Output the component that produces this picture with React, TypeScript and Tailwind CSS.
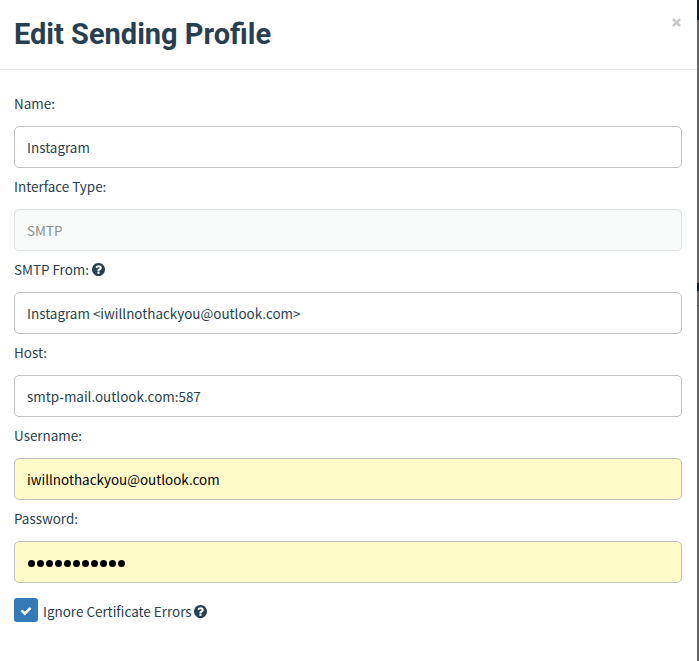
import type { ReactNode } from "react";

function QuestionIcon() {
  return (
    <svg viewBox="128 128 1536 1536" className="size-[13px] shrink-0" fill="currentColor">
      <path d="M1024 1376v-192q0-14-9-23t-23-9h-192q-14 0-23 9t-9 23v192q0 14 9 23t23 9h192q14 0 23-9t9-23zM1280 704q0-88-55.5-163t-138.5-116-170-41q-243 0-371 213-15 24 8 42l132 100q7 6 19 6 16 0 25-12 53-68 86-92 34-24 86-24 48 0 85.5 26t37.5 59q0 38-20 61t-68 45q-63 28-115.5 86.5t-52.5 125.5v36q0 14 9 23t23 9h192q14 0 23-9t9-23q0-19 21.5-49.5t54.5-49.5q32-18 49-28.5t46-35 44.5-48 28-60.5 12.5-81zM1664 896q0 209-103 385.5t-279.5 279.5-385.5 103-385.5-103-279.5-279.5-103-385.5 103-385.5 279.5-279.5 385.5-103 385.5 103 279.5 279.5 103 385.5z" />
    </svg>
  );
}

type FieldProps = { label: string; help?: boolean; tone: string; children: ReactNode };

function Field({ label, help, tone, children }: FieldProps) {
  return (
    <div className="h-[83px]">
      <div className="flex h-[21px] items-center gap-[3px]">
        <span>{label}</span>
        {help && <QuestionIcon />}
      </div>
      <div className={`mt-[12px] flex h-[42px] items-center rounded-[5px] border px-3 ${tone}`}>
        {children}
      </div>
    </div>
  );
}

const plain = "border-[#bdc3c7] bg-white";
const disabled = "border-[#e0e4e5] bg-[#f8faf9] text-[#8c8f90]";
const autofill = "border-[#bdc3c7] bg-[#fffbc8] text-black";

export default function App() {
  return (
    <div className="flex h-[661px] w-[699px] overflow-hidden bg-white font-['Noto_Sans_CJK_SC',sans-serif] text-[13.45px] leading-[21px] text-[#283f50]">
      <main className="w-[697px]">
        <header className="flex h-[70px] items-start justify-between border-b border-[#e5e5e5] pl-[14px] pr-4">
          <h1 className="mt-[18px] font-['Roboto',sans-serif] text-[29px] font-bold leading-[33px]">
            Edit Sending Profile
          </h1>
          <button aria-label="Close" className="mt-[18px] text-[#c8c8c8]">
            <svg viewBox="0 0 9 9" className="size-[9px]" fill="none" stroke="currentColor" strokeWidth="2.5">
              <path d="M0.9 0.9L8.1 8.1M8.1 0.9L0.9 8.1" />
            </svg>
          </button>
        </header>
        <form className="pl-[14px] pr-[15px] pt-[23px]">
          <Field label="Name:" tone={plain}>Instagram</Field>
          <Field label="Interface Type:" tone={disabled}>SMTP</Field>
          <Field label="SMTP From:" help tone={plain}>Instagram &lt;iwillnothackyou@outlook.com&gt;</Field>
          <Field label="Host:" tone={plain}>smtp-mail.outlook.com:587</Field>
          <Field label="Username:" tone={autofill}>iwillnothackyou@outlook.com</Field>
          <Field label="Password:" tone={autofill}>
            <span className="flex gap-[2px] pl-px pt-[3px]">
              {Array.from({ length: 11 }, (_, i) => (
                <span key={i} className="size-[7px] rounded-full bg-black" />
              ))}
            </span>
          </Field>
          <div className="mt-[7px] flex items-center">
            <span className="flex size-6 items-center justify-center rounded-[3px] bg-[#337ab7] pt-[2px] text-white">
              <svg viewBox="0 0 1792 1792" className="size-[12px]" fill="currentColor">
                <path d="M1671 566q0 40-28 68l-724 724-136 136q-28 28-68 28t-68-28l-136-136-362-362q-28-28-28-68t28-68l136-136q28-28 68-28t68 28l294 295 656-657q28-28 68-28t68 28l136 136q28 28 28 68z" />
              </svg>
            </span>
            <span className="ml-[5px] mr-[2.5px] mt-[3px]">Ignore Certificate Errors</span>
            <span className="mt-[3px]"><QuestionIcon /></span>
          </div>
        </form>
      </main>
      <aside className="flex w-[2px] flex-col bg-[#666666]">
        <div className="h-5 bg-[#0e1a24]" />
        <div className="mt-[263px] h-2 bg-[#16212b]" />
        <div className="mt-[14px] h-px bg-[#555555]" />
      </aside>
    </div>
  );
}
